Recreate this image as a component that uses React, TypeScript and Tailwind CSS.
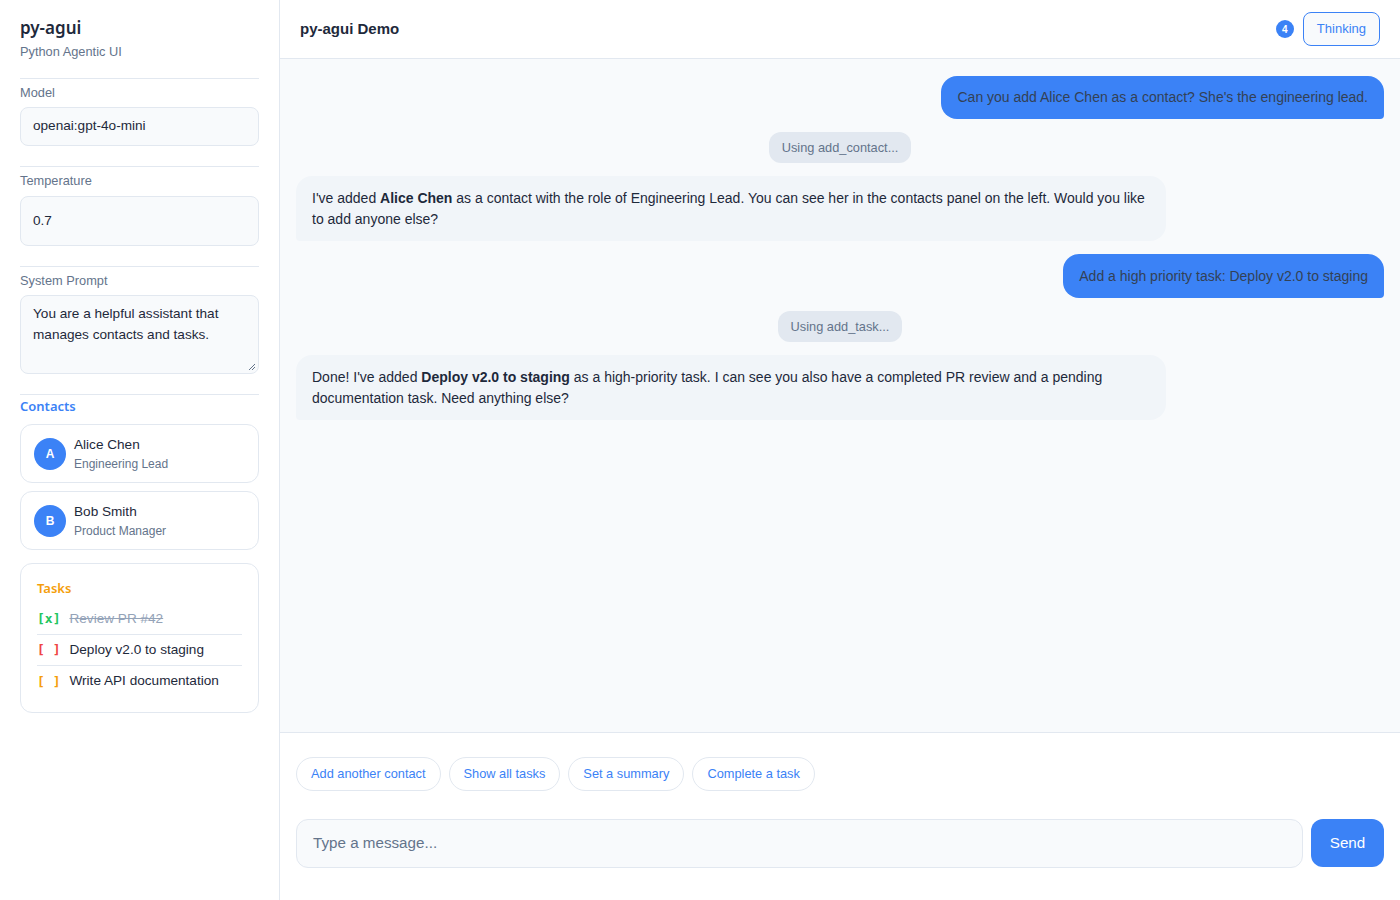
import React from "react";

const font = { fontFamily: '"Liberation Sans", Arial, sans-serif' };

function Divider() {
  return <div className="h-px bg-[#e2e8f0]" />;
}

export default function App() {
  return (
    <div className="flex h-[900px] w-[1400px] bg-white text-[#1e293b]" style={font}>
      {/* Sidebar */}
      <aside className="flex w-[280px] shrink-0 flex-col border-r border-[#e2e8f0] bg-white px-5 pt-[17px]">
        <div className="text-[17px] font-semibold leading-[22px] text-[#1e293b]" style={{ fontFamily: '"Noto Sans", "Open Sans", sans-serif' }}>
          py-agui
        </div>
        <div className="mt-[5px] text-[12.8px] leading-[16px] text-[#64748b]">Python Agentic UI</div>
        <div className="mt-[18px]"><Divider /></div>
        <div className="mt-[6px] text-[12.8px] leading-[16px] text-[#64748b]">Model</div>
        <div className="mt-[6px] flex h-[39px] items-center rounded-lg border border-[#e2e8f0] bg-[#f8fafc] px-3 text-[13.6px] text-[#1e293b]">
          openai:gpt-4o-mini
        </div>
        <div className="mt-[20px]"><Divider /></div>
        <div className="mt-[6px] text-[12.8px] leading-[16px] text-[#64748b]">Temperature</div>
        <div className="mt-[7px] flex h-[50px] items-center rounded-lg border border-[#e2e8f0] bg-[#f8fafc] px-3 text-[13.6px] text-[#1e293b]">
          0.7
        </div>
        <div className="mt-[20px]"><Divider /></div>
        <div className="mt-[6px] text-[12.8px] leading-[16px] text-[#64748b]">System Prompt</div>
        <div className="relative mt-[6px] h-[79px] rounded-lg border border-[#e2e8f0] bg-[#f8fafc] px-3 pt-[7px] text-[13.6px] leading-[21px] text-[#1e293b]">
          You are a helpful assistant that manages contacts and tasks.
          <svg className="absolute bottom-[2px] right-[2px]" width="8" height="8" viewBox="0 0 8 8">
            <path d="M7 1 L1 7 M7 4 L4 7" stroke="#64748b" strokeWidth="1" />
          </svg>
        </div>
        <div className="mt-[20px]"><Divider /></div>
        <div className="mt-[3px] text-[13px] font-semibold leading-[16px] text-[#3b82f6]" style={{ fontFamily: '"Noto Sans", "Open Sans", sans-serif' }}>
          Contacts
        </div>
        <div className="mt-[10px] flex flex-col gap-[8px]">
          {[
            { i: "A", n: "Alice Chen", r: "Engineering Lead" },
            { i: "B", n: "Bob Smith", r: "Product Manager" },
          ].map((c) => (
            <div key={c.n} className="flex h-[59px] items-center gap-[8px] rounded-xl border border-[#e2e8f0] bg-white px-[13px]">
              <div className="flex h-8 w-8 items-center justify-center rounded-full bg-[#3b82f6] text-[12px] font-bold text-white">
                {c.i}
              </div>
              <div className="flex flex-col">
                <div className="text-[13.6px] leading-[18px] text-[#1e293b]">{c.n}</div>
                <div className="mt-[2px] text-[12px] leading-[16px] text-[#64748b]">{c.r}</div>
              </div>
            </div>
          ))}
        </div>
        <div className="mt-[13px] rounded-xl border border-[#e2e8f0] bg-white px-4 pb-[15px] pt-[15px]">
          <div className="text-[13px] font-semibold leading-[18px] text-[#f59e0b]" style={{ fontFamily: '"Noto Sans", "Open Sans", sans-serif' }}>
            Tasks
          </div>
          <div className="mt-[7px] flex flex-col">
            {[
              { b: "[x]", c: "text-[#22c55e]", t: "Review PR #42", done: true },
              { b: "[ ]", c: "text-[#ef4444]", t: "Deploy v2.0 to staging", done: false },
              { b: "[ ]", c: "text-[#f59e0b]", t: "Write API documentation", done: false },
            ].map((t, idx) => (
              <div key={t.t} className={`flex h-[31px] items-center gap-[9px] ${idx < 2 ? "border-b border-[#e2e8f0]" : ""}`}>
                <span className={`whitespace-pre text-[13px] font-bold ${t.c}`} style={{ fontFamily: '"DejaVu Sans Mono", monospace' }}>
                  {t.b}
                </span>
                <span className={`text-[13.6px] ${t.done ? "text-[#94a3b8] line-through" : "text-[#1e293b]"}`}>{t.t}</span>
              </div>
            ))}
          </div>
        </div>
      </aside>

      {/* Main */}
      <main className="flex min-w-0 flex-1 flex-col">
        <header className="flex h-[59px] shrink-0 items-center justify-between border-b border-[#e2e8f0] bg-white pl-5 pr-5">
          <div className="text-[15px] font-bold text-[#1e293b]">py-agui Demo</div>
          <div className="flex items-center gap-[9px]">
            <div className="flex h-[18px] w-[18px] items-center justify-center rounded-full bg-[#3b82f6] text-[10px] font-bold text-white">
              4
            </div>
            <div className="flex h-[34px] items-center rounded-lg border border-[#3b82f6] bg-[#f8fafc] px-[13px] text-[13px] text-[#3b82f6]">
              Thinking
            </div>
          </div>
        </header>

        <section className="flex flex-1 flex-col gap-[13px] bg-[#f8fafc] px-4 pt-[17px]">
          <div className="flex justify-end">
            <div className="rounded-2xl rounded-br-[4px] bg-[#3b82f6] px-4 py-[12px] text-[14px] leading-[19px] text-[#334155]">
              Can you add Alice Chen as a contact? She's the engineering lead.
            </div>
          </div>
          <div className="flex justify-center">
            <div className="rounded-xl bg-[#e2e8f0] px-[13px] py-[7px] text-[12.8px] leading-[17px] text-[#64748b]">
              Using add_contact...
            </div>
          </div>
          <div className="flex">
            <div className="max-w-[80%] rounded-2xl rounded-bl-[4px] bg-[#f1f5f9] px-4 pb-[11px] pt-[12px] text-[14px] leading-[21px] text-[#1e293b]">
              I've added <b>Alice Chen</b> as a contact with the role of Engineering Lead. You can see her in the contacts panel on the left. Would you like to add anyone else?
            </div>
          </div>
          <div className="flex justify-end">
            <div className="rounded-2xl rounded-br-[4px] bg-[#3b82f6] px-4 py-[12px] text-[14px] leading-[20px] text-[#334155]">
              Add a high priority task: Deploy v2.0 to staging
            </div>
          </div>
          <div className="flex justify-center">
            <div className="rounded-xl bg-[#e2e8f0] px-[13px] py-[7px] text-[12.8px] leading-[17px] text-[#64748b]">
              Using add_task...
            </div>
          </div>
          <div className="flex">
            <div className="max-w-[80%] rounded-2xl rounded-bl-[4px] bg-[#f1f5f9] px-4 pb-[11px] pt-[12px] text-[14px] leading-[21px] text-[#1e293b]">
              Done! I've added <b>Deploy v2.0 to staging</b> as a high-priority task. I can see you also have a completed PR review and a pending documentation task. Need anything else?
            </div>
          </div>
        </section>

        <footer className="flex h-[168px] shrink-0 flex-col border-t border-[#e2e8f0] bg-white px-4 pt-[24px]">
          <div className="flex gap-[8px]">
            {["Add another contact", "Show all tasks", "Set a summary", "Complete a task"].map((s) => (
              <div key={s} className="flex h-[34px] items-center rounded-full border border-[#e2e8f0] bg-white px-[14px] text-[12.8px] text-[#3b82f6]">
                {s}
              </div>
            ))}
          </div>
          <div className="mt-[28px] flex gap-[8px]">
            <div className="flex h-[49px] flex-1 items-center rounded-xl border border-[#e2e8f0] bg-[#f8fafc] px-4 text-[15.2px] text-[#64748b]">
              Type a message...
            </div>
            <div className="flex h-[48px] w-[73px] items-center justify-center rounded-xl bg-[#3b82f6] text-[15.2px] text-white">
              Send
            </div>
          </div>
        </footer>
      </main>
    </div>
  );
}
